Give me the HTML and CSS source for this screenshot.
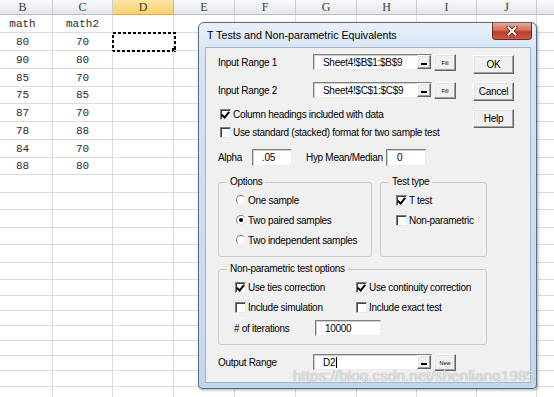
FILE: index.html
```html
<!DOCTYPE html>
<html lang="en">
<head>
    <meta charset="UTF-8">
    <meta name="viewport" content="width=device-width, initial-scale=1.0">
    <title>T Tests and Non-parametric Equivalents</title>
    <link rel="stylesheet" href="styles.css">
</head>
<body>
    <div class="sheet">
        <div class="row head">
            <div class="c">B</div><div class="c">C</div><div class="c active">D</div><div class="c">E</div><div class="c">F</div><div class="c">G</div><div class="c">H</div><div class="c">I</div><div class="c">J</div><div class="c"></div>
        </div>
        <div class="row"><div class="c">math</div><div class="c">math2</div><div class="c"></div><div class="c"></div><div class="c"></div><div class="c"></div><div class="c"></div><div class="c"></div><div class="c"></div><div class="c"></div></div>
        <div class="row"><div class="c">80</div><div class="c">70</div><div class="c sel"><svg class="ants" width="64" height="20" viewBox="0 0 64 20"><rect x="1" y="1" width="62" height="18" fill="none" stroke="#000" stroke-width="2" stroke-dasharray="3 2"/><rect x="60" y="16" width="4" height="4" fill="#000"/></svg></div><div class="c"></div><div class="c"></div><div class="c"></div><div class="c"></div><div class="c"></div><div class="c"></div><div class="c"></div></div>
        <div class="row"><div class="c">90</div><div class="c">80</div><div class="c"></div><div class="c"></div><div class="c"></div><div class="c"></div><div class="c"></div><div class="c"></div><div class="c"></div><div class="c"></div></div>
        <div class="row"><div class="c">85</div><div class="c">70</div><div class="c"></div><div class="c"></div><div class="c"></div><div class="c"></div><div class="c"></div><div class="c"></div><div class="c"></div><div class="c"></div></div>
        <div class="row s17"><div class="c">75</div><div class="c">85</div><div class="c"></div><div class="c"></div><div class="c"></div><div class="c"></div><div class="c"></div><div class="c"></div><div class="c"></div><div class="c"></div></div>
        <div class="row"><div class="c">87</div><div class="c">70</div><div class="c"></div><div class="c"></div><div class="c"></div><div class="c"></div><div class="c"></div><div class="c"></div><div class="c"></div><div class="c"></div></div>
        <div class="row"><div class="c">78</div><div class="c">88</div><div class="c"></div><div class="c"></div><div class="c"></div><div class="c"></div><div class="c"></div><div class="c"></div><div class="c"></div><div class="c"></div></div>
        <div class="row"><div class="c">84</div><div class="c">70</div><div class="c"></div><div class="c"></div><div class="c"></div><div class="c"></div><div class="c"></div><div class="c"></div><div class="c"></div><div class="c"></div></div>
        <div class="row s17"><div class="c">88</div><div class="c">80</div><div class="c"></div><div class="c"></div><div class="c"></div><div class="c"></div><div class="c"></div><div class="c"></div><div class="c"></div><div class="c"></div></div>
        <div class="row"><div class="c"></div><div class="c"></div><div class="c"></div><div class="c"></div><div class="c"></div><div class="c"></div><div class="c"></div><div class="c"></div><div class="c"></div><div class="c"></div></div>
        <div class="row s17"><div class="c"></div><div class="c"></div><div class="c"></div><div class="c"></div><div class="c"></div><div class="c"></div><div class="c"></div><div class="c"></div><div class="c"></div><div class="c"></div></div>
        <div class="row"><div class="c"></div><div class="c"></div><div class="c"></div><div class="c"></div><div class="c"></div><div class="c"></div><div class="c"></div><div class="c"></div><div class="c"></div><div class="c"></div></div>
        <div class="row s17"><div class="c"></div><div class="c"></div><div class="c"></div><div class="c"></div><div class="c"></div><div class="c"></div><div class="c"></div><div class="c"></div><div class="c"></div><div class="c"></div></div>
        <div class="row"><div class="c"></div><div class="c"></div><div class="c"></div><div class="c"></div><div class="c"></div><div class="c"></div><div class="c"></div><div class="c"></div><div class="c"></div><div class="c"></div></div>
        <div class="row s17"><div class="c"></div><div class="c"></div><div class="c"></div><div class="c"></div><div class="c"></div><div class="c"></div><div class="c"></div><div class="c"></div><div class="c"></div><div class="c"></div></div>
        <div class="row s16"><div class="c"></div><div class="c"></div><div class="c"></div><div class="c"></div><div class="c"></div><div class="c"></div><div class="c"></div><div class="c"></div><div class="c"></div><div class="c"></div></div>
        <div class="row s15"><div class="c"></div><div class="c"></div><div class="c"></div><div class="c"></div><div class="c"></div><div class="c"></div><div class="c"></div><div class="c"></div><div class="c"></div><div class="c"></div></div>
        <div class="row s15"><div class="c"></div><div class="c"></div><div class="c"></div><div class="c"></div><div class="c"></div><div class="c"></div><div class="c"></div><div class="c"></div><div class="c"></div><div class="c"></div></div>
        <div class="row s15"><div class="c"></div><div class="c"></div><div class="c"></div><div class="c"></div><div class="c"></div><div class="c"></div><div class="c"></div><div class="c"></div><div class="c"></div><div class="c"></div></div>
        <div class="row s15"><div class="c"></div><div class="c"></div><div class="c"></div><div class="c"></div><div class="c"></div><div class="c"></div><div class="c"></div><div class="c"></div><div class="c"></div><div class="c"></div></div>
        <div class="row s15"><div class="c"></div><div class="c"></div><div class="c"></div><div class="c"></div><div class="c"></div><div class="c"></div><div class="c"></div><div class="c"></div><div class="c"></div><div class="c"></div></div>
        <div class="row s16"><div class="c"></div><div class="c"></div><div class="c"></div><div class="c"></div><div class="c"></div><div class="c"></div><div class="c"></div><div class="c"></div><div class="c"></div><div class="c"></div></div>
        <div class="row s16"><div class="c"></div><div class="c"></div><div class="c"></div><div class="c"></div><div class="c"></div><div class="c"></div><div class="c"></div><div class="c"></div><div class="c"></div><div class="c"></div></div>
    </div>

    <div class="dialog">
        <div class="titlebar">
            <span class="title">T Tests and Non-parametric Equivalents</span>
            <button class="close">
                <svg width="12" height="10" viewBox="0 0 12 10">
                    <path d="M2.5 1.5 L9.5 8.5 M9.5 1.5 L2.5 8.5" stroke="#5a1a12" stroke-width="3.6" stroke-linecap="square"/>
                    <path d="M2.5 1.5 L9.5 8.5 M9.5 1.5 L2.5 8.5" stroke="#fff" stroke-width="2" stroke-linecap="square"/>
                </svg>
            </button>
        </div>
        <div class="client">
            <div class="top">
                <div class="top-form">
                    <div class="range-row">
                        <label>Input Range 1</label>
                        <div class="field range"><span class="value">Sheet4!$B$1:$B$9</span><span class="pick"></span></div>
                        <button class="mini">Fill</button>
                    </div>
                    <div class="range-row">
                        <label>Input Range 2</label>
                        <div class="field range"><span class="value">Sheet4!$C$1:$C$9</span><span class="pick"></span></div>
                        <button class="mini">Fill</button>
                    </div>
                    <div class="check-row first"><span class="check on"></span>Column headings included with data</div>
                    <div class="check-row"><span class="check"></span>Use standard (stacked) format for two sample test</div>
                    <div class="alpha-row">
                        <label class="alpha-label">Alpha</label>
                        <div class="field small">.05</div>
                        <label class="hyp-label">Hyp Mean/Median</label>
                        <div class="field small zero">0</div>
                    </div>
                </div>
                <div class="side">
                    <button class="btn">OK</button>
                    <button class="btn">Cancel</button>
                    <button class="btn">Help</button>
                </div>
            </div>

            <div class="groups">
                <fieldset class="options">
                    <legend>Options</legend>
                    <div class="group-body">
                        <div class="opt-row"><span class="radio"></span>One sample</div>
                        <div class="opt-row"><span class="radio on"></span>Two paired samples</div>
                        <div class="opt-row"><span class="radio"></span>Two independent samples</div>
                    </div>
                </fieldset>
                <fieldset class="test-type">
                    <legend>Test type</legend>
                    <div class="group-body">
                        <div class="opt-row"><span class="check on"></span>T test</div>
                        <div class="opt-row"><span class="check"></span>Non-parametric</div>
                    </div>
                </fieldset>
            </div>

            <fieldset class="nonparam">
                <legend>Non-parametric test options</legend>
                <div class="np-grid">
                    <div class="opt-row"><span class="check on"></span>Use ties correction</div>
                    <div class="opt-row"><span class="check on"></span>Use continuity correction</div>
                    <div class="opt-row"><span class="check"></span>Include simulation</div>
                    <div class="opt-row"><span class="check"></span>Include exact test</div>
                </div>
                <div class="iter-row">
                    <label>#&nbsp;of iterations</label>
                    <div class="field iter">10000</div>
                </div>
            </fieldset>

            <div class="range-row output-row">
                <label>Output Range</label>
                <div class="field range"><span class="value">D2<span class="caret"></span></span><span class="pick"></span></div>
                <button class="mini">New</button>
            </div>
        </div>
    </div>

    <div class="watermark">https://blog.csdn.net/shenliang1985</div>
</body>
</html>
```

FILE: styles.css
```css
* {
    box-sizing: border-box;
}
body {
    margin: 0;
    width: 554px;
    height: 397px;
    overflow: hidden;
    position: relative;
    background: #fff;
    font-family: "Liberation Sans", Arial, sans-serif;
}

/* spreadsheet behind the dialog */
.sheet {
    width: 554px;
    height: 397px;
    overflow: hidden;
    font-family: "Liberation Mono", monospace;
    font-size: 11px;
    color: #2b2b2b;
}
.row {
    display: flex;
    height: 18px;
    margin-left: -7px;
}
.row.s17 { height: 17px; }
.row.s16 { height: 16px; }
.row.s15 { height: 15px; }
.c {
    flex: none;
    width: 60px;
    display: flex;
    align-items: center;
    justify-content: center;
    border-right: 1px solid #dadcdd;
    border-bottom: 1px solid #dadcdd;
    position: relative;
}
.c:nth-child(n+3):nth-child(-n+6) {
    width: 61px;
}
.row.head {
    height: 15px;
    font-family: "Liberation Serif", serif;
    font-size: 12px;
}
.head .c {
    background: linear-gradient(#f8f9fa, #e3e6ea);
    border-right-color: #c9ccd1;
    border-bottom-color: #b9bec5;
    color: #3c3c3c;
}
.head .c.active {
    background: linear-gradient(#fce6a6, #f8d06c);
    border-bottom-color: #f0a53a;
    border-right-color: #e4b258;
}
.ants {
    position: absolute;
    left: -1px;
    top: -1px;
}

/* dialog window */
.dialog {
    position: absolute;
    left: 198px;
    top: 22px;
    width: 339px;
    height: 367px;
    display: flex;
    flex-direction: column;
    padding: 0 5px 5px 6px;
    border: 1px solid #5b6a7c;
    border-radius: 6px 6px 4px 4px;
    background: linear-gradient(#e9f0f9, #d6e4f4 30px, #c2d7ef);
    box-shadow: 1px 1px 3px rgba(0, 0, 0, 0.35);
    font-size: 10px;
    letter-spacing: -0.3px;
    color: #000;
}
.titlebar {
    display: flex;
    align-items: center;
    height: 24px;
}
.title {
    margin-left: 2px;
    font-size: 10.7px;
    letter-spacing: 0;
}
.close {
    align-self: flex-start;
    margin-left: auto;
    margin-right: -1px;
    width: 40px;
    height: 17px;
    padding: 0;
    display: flex;
    align-items: center;
    justify-content: center;
    border: 1px solid #6b2a21;
    border-top: none;
    border-radius: 0 0 4px 4px;
    background: linear-gradient(#e8a496, #d4705b 45%, #bd3f2a 55%, #cb5a44);
}
.client {
    flex: 1;
    background: #f0f0f0;
    border: 1px solid #a3b5ca;
    padding: 6px 16px 0 12px;
}

/* top area with range fields and side buttons */
.top {
    display: flex;
}
.top-form {
    flex: 1;
}
.side {
    display: flex;
    flex-direction: column;
    gap: 8px;
    padding-top: 1px;
}
button {
    font-family: inherit;
    letter-spacing: inherit;
    color: #000;
}
.btn, .mini, .pick {
    background: #f0f0f0;
    border: 1px solid;
    border-color: #fff #646464 #646464 #fff;
    box-shadow: inset -1px -1px 0 #a0a0a0, inset 1px 1px 0 #e3e3e3;
    padding: 0;
}
.btn {
    width: 41px;
    height: 19px;
    font-size: 10px;
}
.mini {
    margin-left: 2px;
    width: 22px;
    height: 17px;
    font-size: 5.5px;
    letter-spacing: 0;
}
.range-row {
    display: flex;
    align-items: flex-start;
    height: 17px;
}
.range-row + .range-row {
    margin-top: 11px;
}
.range-row label {
    width: 95px;
    line-height: 17px;
}
.field {
    height: 16px;
    display: flex;
    align-items: center;
    background: #fff;
    border: 1px solid;
    border-color: #7d7d7d #ececec #ececec #7d7d7d;
    box-shadow: inset 1px 1px 0 #cfcfcf;
}
.field.range {
    width: 119px;
    padding-left: 9px;
}
.field .value {
    flex: 1;
    display: flex;
    align-items: center;
}
.pick {
    width: 14px;
    height: 14px;
    display: flex;
    align-items: flex-end;
    justify-content: center;
    padding-bottom: 3px;
}
.pick::after {
    content: "";
    width: 6px;
    height: 2px;
    background: #000;
}
.caret {
    width: 1px;
    height: 11px;
    margin-left: 1px;
    background: #000;
}
.check-row {
    display: flex;
    align-items: center;
    height: 16px;
    margin-top: 2px;
    padding-left: 2px;
}
.check-row.first {
    margin-top: 7px;
}
.check {
    flex: none;
    width: 11px;
    height: 11px;
    margin-right: 2px;
    background: #fff;
    border: 1px solid;
    border-color: #7d7d7d #e8e8e8 #e8e8e8 #7d7d7d;
    box-shadow: inset 1px 1px 0 #444;
    position: relative;
}
.check.on::after {
    content: "";
    position: absolute;
    left: 2px;
    top: 0px;
    width: 3px;
    height: 6px;
    border: solid #000;
    border-width: 0 2px 2px 0;
    transform: rotate(40deg);
}
.radio {
    flex: none;
    width: 10px;
    height: 10px;
    margin-right: 2px;
    border-radius: 50%;
    background: #fff;
    border: 1px solid;
    border-color: #7d7d7d #e6e6e6 #e6e6e6 #7d7d7d;
    display: flex;
    align-items: center;
    justify-content: center;
}
.radio.on::after {
    content: "";
    width: 4px;
    height: 4px;
    border-radius: 50%;
    background: #000;
}
.alpha-row {
    display: flex;
    align-items: center;
    height: 17px;
    margin-top: 9px;
}
.alpha-label {
    width: 34px;
}
.hyp-label {
    width: 80px;
    margin-left: 14px;
}
.field.small {
    width: 40px;
    height: 17px;
    padding-left: 9px;
}
.field.zero {
    padding-left: 10px;
}

/* group boxes */
fieldset {
    margin: 0;
    padding: 0;
    min-width: 0;
    border: 1px solid #c6cacf;
    border-radius: 3px;
}
legend {
    margin-left: 8px;
    padding: 0 3px;
    line-height: 12px;
}
.groups {
    display: flex;
    gap: 8px;
    margin-top: 10px;
}
.options {
    width: 154px;
}
.test-type {
    width: 107px;
}
.group-body {
    padding: 2px 0 6px 17px;
}
.test-type .group-body {
    padding-left: 15px;
}
.opt-row {
    display: flex;
    align-items: center;
    height: 20px;
}
.nonparam {
    width: 269px;
    margin-top: 6px;
}
.np-grid {
    display: grid;
    grid-template-columns: 121px auto;
    padding: 2px 0 0 16px;
}
.iter-row {
    display: flex;
    align-items: center;
    height: 16px;
    margin: 3px 0 8px 15px;
}
.iter-row label {
    width: 81px;
}
.field.iter {
    width: 66px;
    padding-left: 9px;
}
.output-row {
    margin-top: 9px;
}

.watermark {
    position: absolute;
    left: 293px;
    top: 367px;
    font-size: 15.4px;
    color: rgba(238, 238, 238, 0.85);
    text-shadow: 0 0 1px rgba(110, 110, 110, 0.75);
    white-space: nowrap;
}
```
